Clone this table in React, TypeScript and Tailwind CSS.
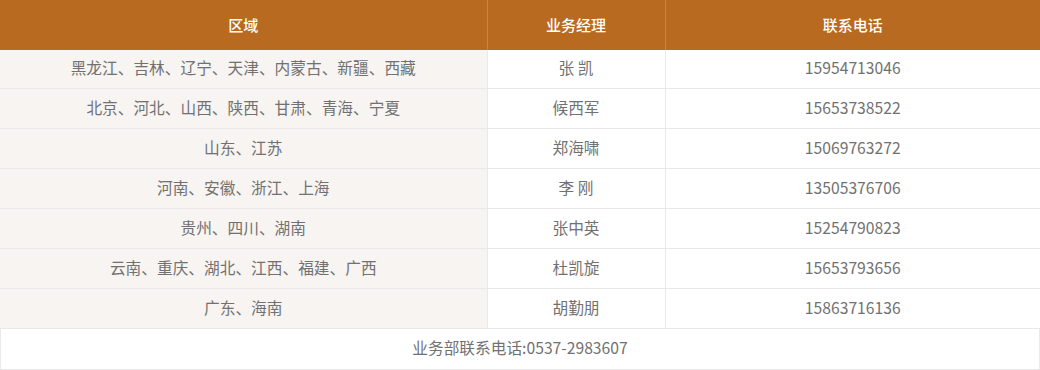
import React from "react";

const rows = [
  { area: "黑龙江、吉林、辽宁、天津、内蒙古、新疆、西藏", name: "张 凯", phone: "15954713046" },
  { area: "北京、河北、山西、陕西、甘肃、青海、宁夏", name: "候西军", phone: "15653738522" },
  { area: "山东、江苏", name: "郑海啸", phone: "15069763272" },
  { area: "河南、安徽、浙江、上海", name: "李 刚", phone: "13505376706" },
  { area: "贵州、四川、湖南", name: "张中英", phone: "15254790823" },
  { area: "云南、重庆、湖北、江西、福建、广西", name: "杜凯旋", phone: "15653793656" },
  { area: "广东、海南", name: "胡勤朋", phone: "15863716136" },
];

export default function App() {
  return (
    <div
      className="w-[1040px] h-[370px] bg-white"
      style={{ fontFamily: '"Noto Sans CJK SC", "Noto Sans", sans-serif' }}
    >
      <table className="w-full border-collapse table-fixed text-[15.7px] text-[#717171]">
        <colgroup>
          <col className="w-[487px]" />
          <col className="w-[178px]" />
          <col />
        </colgroup>
        <thead>
          <tr className="h-[50px] bg-[#b86a20] text-white">
            <th className="font-medium text-[15px] border-r border-[#c88545]">区域</th>
            <th className="font-medium text-[15px] border-r border-[#c88545]">业务经理</th>
            <th className="font-medium text-[15px]">联系电话</th>
          </tr>
        </thead>
        <tbody>
          {rows.map((r, i) => (
            <tr key={r.phone} className={i === 0 ? "h-[38px]" : "h-[40px]"}>
              <td className="bg-[#f7f4f1] text-center pb-px border-b border-r border-[#e9e9e9]">{r.area}</td>
              <td className="text-center pb-px border-b border-r border-[#e9e9e9]">{r.name}</td>
              <td className="text-center pb-px border-b border-[#e9e9e9]">{r.phone}</td>
            </tr>
          ))}
        </tbody>
      </table>
      <div className="h-[41px] pb-px flex items-center justify-center border border-t-0 border-[#e9e9e9] text-[15.7px] text-[#717171]">
        业务部联系电话:0537-2983607
      </div>
    </div>
  );
}
